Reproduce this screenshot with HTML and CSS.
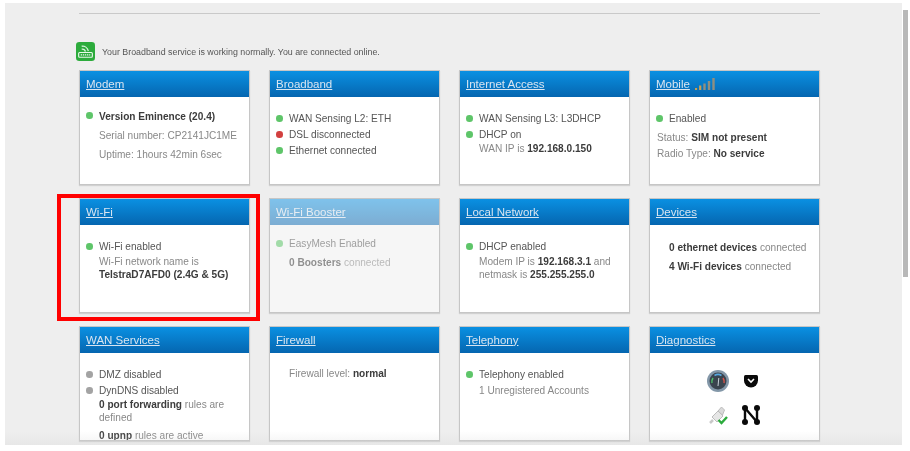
FILE: index.html
```html
<!DOCTYPE html>
<html lang="en">
<head>
<meta charset="utf-8">
<title>Broadband status</title>
<link rel="stylesheet" href="styles.css">
</head>
<body>
<div class="screen">
  <main class="page">
    <hr class="rule">
    <div class="status">
      <svg class="status-icon" viewBox="0 0 20 20" aria-hidden="true">
        <rect width="20" height="20" rx="3.5" fill="#2cab3c"/>
        <path d="M6 4.5c3-.5 6 1.5 7 5" fill="none" stroke="#d9f3dc" stroke-width="1.4"/>
        <path d="M6 7.5c1.8-.2 3.5.8 4 2.500" fill="none" stroke="#d9f3dc" stroke-width="1.4"/>
        <rect x="2.800" y="11" width="14.400" height="5" rx="1" fill="none" stroke="#e8f8ea" stroke-width="1.200"/>
        <path d="M5 13.500h10" stroke="#e8f8ea" stroke-width="1.400" stroke-dasharray="1.400 .8"/>
      </svg>
      <span>Your Broadband service is working normally. You are connected online.</span>
    </div>
    <div class="grid">
      <section class="card">
        <h2 class="head"><a href="#">Modem</a></h2>
        <div class="body pad-10">
          <p class="item tall"><i class="dot green"></i><b>Version Eminence (20.4)</b></p>
          <p class="sub tall">Serial number: CP2141JC1ME</p>
          <p class="sub tall">Uptime: 1hours 42min 6sec</p>
        </div>
      </section>
      <section class="card">
        <h2 class="head"><a href="#">Broadband</a></h2>
        <div class="body">
          <p class="item"><i class="dot green"></i>WAN Sensing L2: ETH</p>
          <p class="item"><i class="dot red"></i>DSL disconnected</p>
          <p class="item"><i class="dot green"></i>Ethernet connected</p>
        </div>
      </section>
      <section class="card">
        <h2 class="head"><a href="#">Internet Access</a></h2>
        <div class="body">
          <p class="item"><i class="dot green"></i>WAN Sensing L3: L3DHCP</p>
          <p class="item"><i class="dot green"></i>DHCP on</p>
          <p class="sub tight">WAN IP is <b>192.168.0.150</b></p>
        </div>
      </section>
      <section class="card">
        <h2 class="head"><a href="#">Mobile</a>
          <svg class="signal" viewBox="0 0 21 14" aria-hidden="true">
            <path d="M9.500 6.500v6.500M14 4v9M18.500 1v12" stroke="#8f8f80" stroke-width="2.400" fill="none"/>
            <path d="M1 11v2M5.200 8.500v4.500" stroke="#c9a050" stroke-width="2.200" fill="none"/>
          </svg>
        </h2>
        <div class="body">
          <p class="item gap-after"><i class="dot green"></i>Enabled</p>
          <p class="plain">Status: <b>SIM not present</b></p>
          <p class="plain">Radio Type: <b>No service</b></p>
        </div>
      </section>

      <section class="card">
        <h2 class="head"><a href="#">Wi-Fi</a></h2>
        <div class="body">
          <p class="item"><i class="dot green"></i>Wi-Fi enabled</p>
          <p class="sub tight first">Wi-Fi network name is</p>
          <p class="sub tight"><b>TelstraD7AFD0 (2.4G &amp; 5G)</b></p>
        </div>
      </section>
      <section class="card off">
        <h2 class="head"><a href="#">Wi-Fi Booster</a></h2>
        <div class="body pad-11">
          <p class="item gap-after"><i class="dot green"></i>EasyMesh Enabled</p>
          <p class="sub"><b>0 Boosters</b> connected</p>
        </div>
      </section>
      <section class="card">
        <h2 class="head"><a href="#">Local Network</a></h2>
        <div class="body">
          <p class="item"><i class="dot green"></i>DHCP enabled</p>
          <p class="sub tight first">Modem IP is <b>192.168.3.1</b> and</p>
          <p class="sub tight">netmask is <b>255.255.255.0</b></p>
        </div>
      </section>
      <section class="card">
        <h2 class="head"><a href="#">Devices</a></h2>
        <div class="body pad-13">
          <p class="sub tall"><b>0 ethernet devices</b> connected</p>
          <p class="sub tall"><b>4 Wi-Fi devices</b> connected</p>
        </div>
      </section>

      <section class="card">
        <h2 class="head"><a href="#">WAN Services</a></h2>
        <div class="body">
          <p class="item"><i class="dot grey"></i>DMZ disabled</p>
          <p class="item"><i class="dot grey"></i>DynDNS disabled</p>
          <p class="sub first-up"><b>0 port forwarding</b> rules are defined</p>
          <p class="sub tight upnp"><b>0 upnp</b> rules are active</p>
        </div>
      </section>
      <section class="card">
        <h2 class="head"><a href="#">Firewall</a></h2>
        <div class="body pad-13">
          <p class="sub">Firewall level: <b>normal</b></p>
        </div>
      </section>
      <section class="card">
        <h2 class="head"><a href="#">Telephony</a></h2>
        <div class="body">
          <p class="item"><i class="dot green"></i>Telephony enabled</p>
          <p class="sub">1 Unregistered Accounts</p>
        </div>
      </section>
      <section class="card">
        <h2 class="head"><a href="#">Diagnostics</a></h2>
        <div class="body icons">
          <svg class="tool" viewBox="0 0 24 24" aria-hidden="true">
            <circle cx="12" cy="12" r="11" fill="#8397a8"/>
            <circle cx="12" cy="12" r="8.500" fill="#3a444e"/>
            <path d="M6 14a6.500 6.500 0 0 1 1-5" stroke="#4fbf6a" stroke-width="1.500" fill="none"/>
            <path d="M8.500 6.500a6.500 6.500 0 0 1 7 0" stroke="#57a8e0" stroke-width="1.500" fill="none"/>
            <path d="M17 9a6.500 6.500 0 0 1 1 5" stroke="#d9534a" stroke-width="1.500" fill="none"/>
            <path d="M12 17l.8-8" stroke="#c8d0d8" stroke-width="1"/>
          </svg>
          <svg class="tool" viewBox="0 0 24 24" aria-hidden="true">
            <path d="M6.500 6h11a1.500 1.500 0 0 1 1.500 1.500v4a7 7 0 0 1-14 0v-4A1.500 1.500 0 0 1 6.500 6z" fill="#0a0a0a"/>
            <path d="M9 10l3 3 3-3" stroke="#fff" stroke-width="1.600" fill="none"/>
          </svg>
          <svg class="tool" viewBox="0 0 24 24" aria-hidden="true">
            <path d="M4 20l3-3" stroke="#c8c8c8" stroke-width="2.500"/>
            <path d="M6 14l6-6 5 5-6 6z" fill="#e6e6e6" stroke="#bcbcbc"/>
            <path d="M12 8l3.500-4 3 3-2 5z" fill="#dadada" stroke="#bcbcbc"/>
            <path d="M12.500 17l3 3 5.500-6" stroke="#2bab3c" stroke-width="2.400" fill="none"/>
          </svg>
          <svg class="tool" viewBox="0 0 24 24" aria-hidden="true">
            <path d="M6 5v14M6 5l12 14M18 5v14" stroke="#0a0a0a" stroke-width="2.400" fill="none"/>
            <circle cx="6" cy="5" r="3" fill="#0a0a0a"/>
            <circle cx="18" cy="5" r="3" fill="#0a0a0a"/>
            <circle cx="6" cy="19" r="3" fill="#0a0a0a"/>
            <circle cx="18" cy="19" r="3" fill="#0a0a0a"/>
          </svg>
        </div>
      </section>
    </div>
    <div class="highlight"></div>
  </main>
  <div class="scrollbar"><div class="thumb"></div></div>
</div>
</body>
</html>
```
FILE: styles.css
```css
* { box-sizing: border-box; }
html, body { margin: 0; height: 100%; background: #fff; overflow: hidden; }
body { font-family: "Liberation Sans", Arial, sans-serif; font-size: 10.100px; color: #555; }
p, h2 { margin: 0; }
.screen { display: flex; width: 910px; height: 451px; padding: 3px 0 6px 5px; filter: blur(0.7px); }
.page { position: relative; flex: none; width: 897px; height: 442px; background: #eee; overflow: hidden; padding: 10px 0 0 74px; }
.page::after { content: ""; position: absolute; left: 0; right: 0; bottom: 0; height: 14px; background: linear-gradient(rgba(225,225,225,0), rgba(215,215,215,.3)); pointer-events: none; }
.rule { width: 741px; height: 1px; margin: 0; border: 0; background: #c9c9c9; }
.status { display: flex; align-items: center; gap: 7px; height: 19px; margin: 28px 0 9px -3px; font-size: 8.850px; color: #555; }
.status-icon { width: 19px; height: 19px; flex: none; }
.grid { display: grid; grid-template-columns: repeat(4, 171px); grid-auto-rows: 115px; gap: 13px 19px; }
.card { display: flex; flex-direction: column; background: #fff; border: 1px solid #c6c6c6; box-shadow: 0 1px 1px rgba(0,0,0,.12); overflow: hidden; }
.card.off { background: #f6f6f6; }
.card.off .head { opacity: .5; }
.card.off .body { opacity: .55; }
.head { display: flex; align-items: center; gap: 5px; flex: none; height: 26px; padding: 0 6px 1px; font-size: 11.500px; font-weight: 400; background: linear-gradient(#0a90e2, #0566b0); }
.head a { color: #d8e5f1; text-decoration: underline; }
.signal { width: 21px; height: 14px; }
.body { flex: 1; padding: 14px 6px 0; line-height: 16px; color: #555; }
.body.pad-10 { padding-top: 10px; }
.body.pad-11 { padding-top: 11px; }
.body.pad-13 { padding-top: 13px; }
.body b { color: #3c3c3c; }
.item { position: relative; padding-left: 13px; }
.item.gap-after { margin-bottom: 3px; }
.dot { position: absolute; left: 0; top: 4px; width: 6.500px; height: 6.500px; border-radius: 50%; }
.green { background: #5ec569; }
.red { background: #d2403f; }
.grey { background: #a3a3a3; }
.tall { line-height: 19px; }
.tall.item .dot { top: 5px; }
.sub { padding-left: 13px; color: #888; }
.tight { line-height: 12.500px; }
.first { margin-top: 1px; }
.first-up { margin-top: -1px; padding-right: 8px; line-height: 13px; }
.upnp { margin-top: 6px; }
.plain { color: #888; margin-left: 1px; }
.icons { display: grid; grid-template-columns: 24px 24px; justify-content: center; align-content: start; gap: 10px 9px; padding: 16px 0 0; }
.tool { width: 24px; height: 24px; }
.highlight { position: absolute; left: 52px; top: 191px; width: 203px; height: 127px; border: 4px solid #f00; }
.scrollbar { width: 8px; padding: 7px 0 0 1px; }
.thumb { width: 5px; height: 267px; background: #b8b8b8; }
```
